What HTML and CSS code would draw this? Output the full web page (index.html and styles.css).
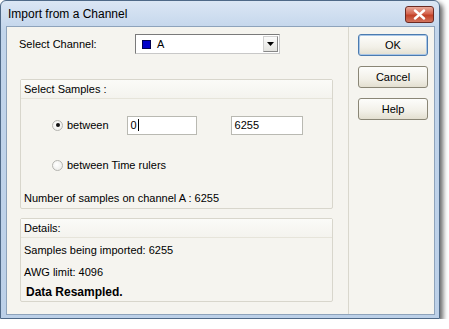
FILE: index.html
```html
<!DOCTYPE html>
<html>
<head>
    <title>Import from a Channel</title>
    <link rel="stylesheet" href="styles.css">
</head>
<body>
    <div class="window">
        <div class="titlebar">
            <span class="title">Import from a Channel</span>
            <span class="close">
                <svg width="13" height="11" viewBox="0 0 13 11"><path d="M2 1.5 L11 9.5 M11 1.5 L2 9.5" stroke="#fff" stroke-width="2.4" stroke-linecap="round"/></svg>
            </span>
        </div>
        <div class="client">
            <div class="main">
                <div class="channel-row">
                    <label class="channel-label">Select Channel:</label>
                    <div class="combo">
                        <span class="swatch"></span>
                        <span class="combo-text">A</span>
                        <span class="combo-btn">
                            <svg width="7" height="4" viewBox="0 0 7 4"><path d="M0 0 H7 L3.5 4 Z" fill="#000"/></svg>
                        </span>
                    </div>
                </div>

                <div class="group samples">
                    <div class="group-head">Select Samples :</div>
                    <div class="group-body">
                        <div class="radio-row">
                            <span class="radio checked"></span>
                            <span class="radio-label">between</span>
                            <div class="field first">0<span class="caret"></span></div>
                            <div class="field second">6255</div>
                        </div>
                        <div class="radio-row second-row">
                            <span class="radio"></span>
                            <span class="radio-label">between Time rulers</span>
                        </div>
                        <div class="info">Number of samples on channel A : 6255</div>
                    </div>
                </div>

                <div class="group details">
                    <div class="group-head">Details:</div>
                    <div class="group-body">
                        <div class="line">Samples being imported: 6255</div>
                        <div class="line">AWG limit: 4096</div>
                        <div class="line strong">Data Resampled.</div>
                    </div>
                </div>
            </div>
            <div class="side">
                <button class="btn default">OK</button>
                <button class="btn">Cancel</button>
                <button class="btn">Help</button>
            </div>
        </div>
    </div>
</body>
</html>
```

FILE: styles.css
```css
body { margin: 0; background: #fff; font-family: "Liberation Sans", Arial, sans-serif; font-size: 11px; color: #000; }

.window { width: 440px; height: 319px; box-sizing: border-box; border: 1px solid #4f6987; border-radius: 6px 6px 0 0; background: linear-gradient(#dbe6f4, #c2d5eb 30px, #bcd0e8); box-shadow: 3px 3px 5px rgba(0,0,0,0.6); padding: 0 4px 3px 5px; display: flex; flex-direction: column; }

.titlebar { height: 25px; display: flex; align-items: center; justify-content: space-between; flex-shrink: 0; }
.title { font-family: "Liberation Sans", Arial, sans-serif; font-size: 12px; color: #000; padding-left: 2px; padding-top: 1px; }
.close { width: 29px; height: 17px; margin-top: 1px; margin-right: 1px; box-sizing: border-box; border: 1px solid #6b2a22; border-radius: 3px; background: linear-gradient(#e9a99a, #d4644f 45%, #c24128 55%, #d2735c); display: flex; align-items: center; justify-content: center; }

.client { flex: 1; display: flex; background: #f5f4ef; border: 1px solid #8ea3bb; }

.main { width: 341px; flex-shrink: 0; padding: 7px 0 0 0; box-sizing: border-box; }
.channel-row { display: flex; align-items: center; height: 20px; padding-left: 12px; }
.channel-label { width: 116px; }
.combo { width: 145px; height: 20px; box-sizing: border-box; border: 1px solid #7a7a7a; border-right-color: #c8c8c8; border-bottom-color: #c8c8c8; background: #fff; display: flex; align-items: center; position: relative; }
.swatch { width: 7px; height: 7px; background: #0000c8; border: 1px solid #000050; margin-left: 6px; }
.combo-text { margin-left: 6px; }
.combo-btn { position: absolute; right: 1px; top: 1px; width: 15px; height: 16px; box-sizing: border-box; background: linear-gradient(#fbfbfb, #e4e4e0); border: 1px solid #d0d0d0; border-right-color: #888; border-bottom-color: #888; display: flex; align-items: center; justify-content: center; }

.group { margin-left: 13px; width: 313px; box-sizing: border-box; border: 1px solid #d8d6cc; border-radius: 2px; }
.samples { margin-top: 25px; height: 130px; }
.details { margin-top: 9px; height: 84px; }
.group-head { height: 18px; line-height: 18px; padding-left: 3px; background: linear-gradient(#fbfbf8, #f4f3ee); border-bottom: 1px solid #e6e4da; }
.group-body { padding-left: 3px; }

.samples .group-body { padding-top: 16px; }
.radio-row { display: flex; align-items: center; height: 20px; padding-left: 28px; }
.second-row { margin-top: 20px; }
.radio { width: 11px; height: 11px; box-sizing: border-box; border: 1px solid #b4b4b0; border-radius: 50%; background: radial-gradient(circle at 40% 40%, #fff, #e8e8e4); display: flex; align-items: center; justify-content: center; }
.radio.checked::after { content: ""; width: 4px; height: 4px; border-radius: 50%; background: #111; }
.radio-label { margin-left: 4px; }
.field { width: 70px; height: 19px; box-sizing: border-box; border: 1px solid #b9b9b2; background: #fff; padding-left: 3px; line-height: 17px; display: flex; align-items: center; }
.field.first { margin-left: 18px; }
.field.second { margin-left: 34px; width: 72px; }
.caret { width: 1px; height: 12px; background: #000; margin-left: 1px; }
.info { margin-top: 15px; height: 16px; line-height: 16px; }

.details .group-body { padding-top: 4px; }
.line { height: 16px; line-height: 16px; margin-bottom: 6px; }
.strong { font-weight: bold; font-size: 12px; margin-bottom: 0; margin-top: -2px; padding-left: 2px; }

.side { flex: 1; border-left: 1px solid #d9d7cd; display: flex; flex-direction: column; padding: 7px 0 0 9px; gap: 10px; }
.btn { width: 70px; height: 22px; box-sizing: border-box; font-family: "Liberation Sans", Arial, sans-serif; font-size: 11px; color: #000; border: 1px solid #8a8676; border-radius: 3px; background: linear-gradient(#fdfdfb, #f2f0e8 60%, #e3dfd0); padding: 0; }
.btn.default { border-color: #4b7bb0; box-shadow: inset 0 0 0 1px #a9c6e6; }
```
